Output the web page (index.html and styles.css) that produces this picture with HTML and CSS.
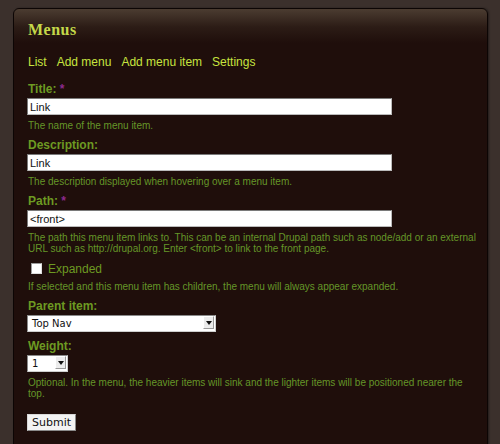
FILE: index.html
```html
<!DOCTYPE html>
<html lang="en">
<head>
    <meta charset="UTF-8">
    <title>Menus</title>
    <link rel="stylesheet" href="styles.css">
</head>
<body>
    <div class="panel">
        <h1>Menus</h1>

        <div class="tabs">
            <a href="#">List</a>
            <a href="#">Add menu</a>
            <a href="#">Add menu item</a>
            <a href="#">Settings</a>
        </div>

        <form class="menu-form">
            <div class="field first">
                <label>Title: <span class="req">*</span></label>
                <input type="text" class="text-input" value="Link">
                <div class="help">The name of the menu item.</div>
            </div>

            <div class="field">
                <label>Description:</label>
                <input type="text" class="text-input" value="Link">
                <div class="help">The description displayed when hovering over a menu item.</div>
            </div>

            <div class="field">
                <label>Path: <span class="req">*</span></label>
                <input type="text" class="text-input" value="&lt;front&gt;">
                <div class="help">The path this menu item links to. This can be an internal Drupal path such as node/add or an external URL such as http://drupal.org. Enter &lt;front&gt; to link to the front page.</div>
            </div>

            <div class="field check">
                <div class="check-row">
                    <span class="box"></span>
                    <span class="check-label">Expanded</span>
                </div>
                <div class="help">If selected and this menu item has children, the menu will always appear expanded.</div>
            </div>

            <div class="field">
                <label>Parent item:</label>
                <div class="select parent">
                    <span class="select-value">Top Nav</span>
                    <span class="select-arrow"><svg width="6" height="4" viewBox="0 0 6 4"><path d="M0 0h6L3 4z" fill="#111"/></svg></span>
                </div>
            </div>

            <div class="field">
                <label>Weight:</label>
                <div class="select weight">
                    <span class="select-value">1</span>
                    <span class="select-arrow"><svg width="6" height="4" viewBox="0 0 6 4"><path d="M0 0h6L3 4z" fill="#111"/></svg></span>
                </div>
                <div class="help">Optional. In the menu, the heavier items will sink and the lighter items will be positioned nearer the<br>top.</div>
            </div>

            <button type="button" class="submit">Submit</button>
        </form>
    </div>
</body>
</html>
```

FILE: styles.css
```css
html, body {
    margin: 0;
    height: 100%;
}
body {
    background-color: #3b302c;
    padding: 8px 12px 0 13px;
    box-sizing: border-box;
    overflow: hidden;
    font-family: 'Liberation Sans', Arial, sans-serif;
}
.panel {
    border: 1px solid #0c0504;
    border-radius: 6px 6px 0 0;
    background: linear-gradient(#4b3c31 0, #2c1c16 18px, #1f0e0b 34px, #1f0e0b 100%);
    box-shadow: 1px 0 2px rgba(0, 0, 0, 0.4);
    padding: 11px 0 40px 13px;
    height: 480px;
}
h1 {
    margin: 0;
    font-family: 'Liberation Serif', 'Times New Roman', serif;
    font-weight: bold;
    font-size: 16px;
    letter-spacing: 0.5px;
    line-height: 20px;
    color: #c4d84a;
    padding-left: 1px;
}
.tabs {
    display: flex;
    gap: 10px;
    margin-top: 15px;
    font-size: 12px;
    line-height: 15px;
    padding-left: 1px;
}
.tabs a {
    color: #c7e43f;
    text-decoration: none;
}
.menu-form {
    margin-top: 12px;
}
.field {
    margin-top: 7px;
}
.field.first {
    margin-top: 0;
}
label {
    display: block;
    font-weight: bold;
    font-size: 12px;
    line-height: 15px;
    color: #6d9a22;
    padding-left: 1px;
}
.req {
    color: #8d2a8d;
}
.text-input {
    display: block;
    box-sizing: border-box;
    width: 365px;
    height: 17px;
    margin: 1px 0 0 0;
    padding: 0 2px;
    border: 1px solid #7a7a7a;
    border-right-color: #bbb;
    border-bottom-color: #bbb;
    background: #fff;
    font-family: 'Liberation Sans', Arial, sans-serif;
    font-size: 11px;
    color: #111;
}
.help {
    margin-top: 5px;
    font-size: 10px;
    line-height: 11px;
    color: #659628;
    padding-left: 1px;
}
.check-row {
    display: flex;
    align-items: center;
    gap: 6px;
    height: 15px;
    margin-top: 7px;
    padding-left: 4px;
}
.box {
    width: 9px;
    height: 9px;
    background: #fff;
    border: 1px solid #999;
    border-right-color: #ddd;
    border-bottom-color: #ddd;
}
.check-label {
    font-size: 12px;
    color: #6d9a22;
}
.select {
    position: relative;
    box-sizing: border-box;
    height: 17px;
    margin-top: 1px;
    background: #fff;
    border: 1px solid #8a8a8a;
    border-right-color: #cfcfcf;
    border-bottom-color: #cfcfcf;
    font-family: 'DejaVu Sans', 'Liberation Sans', sans-serif;
    font-size: 10px;
    line-height: 15px;
    color: #111;
}
.select.parent {
    width: 189px;
}
.select.weight {
    width: 41px;
}
.select-value {
    padding-left: 4px;
}
.select-arrow {
    position: absolute;
    top: 0;
    right: 1px;
    width: 11px;
    height: 13px;
    box-sizing: border-box;
    border: 1px solid #fff;
    border-right-color: #9a9a9a;
    border-bottom-color: #9a9a9a;
    background: #ececec;
    display: flex;
    align-items: center;
    justify-content: center;
}
.submit {
    display: block;
    margin-top: 15px;
    width: 49px;
    height: 17px;
    padding: 0;
    background: #f3f3f3;
    border: 1px solid #d8d8d8;
    border-right-color: #8a8a8a;
    border-bottom-color: #8a8a8a;
    font-family: 'DejaVu Sans', 'Liberation Sans', sans-serif;
    font-size: 11px;
    color: #111;
}
```
